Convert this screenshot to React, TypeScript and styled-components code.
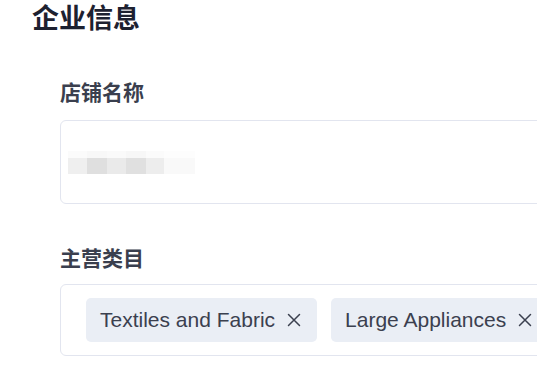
import { ReactElement } from "react";
import styled, { createGlobalStyle } from "styled-components";

const GlobalStyle = createGlobalStyle`
  html, body {
    margin: 0;
    padding: 0;
    background: #ffffff;
  }
  body {
    font-family: "Liberation Sans", "Noto Sans CJK SC", sans-serif;
  }
`;

const Page = styled.div`
  width: 537px;
  height: 379px;
  overflow: hidden;
  padding-left: 32px;
  box-sizing: border-box;
`;

const Title = styled.h2`
  margin: 0;
  font-family: "Noto Sans CJK SC", sans-serif;
  font-size: 27px;
  line-height: 34px;
  font-weight: 700;
  color: #1d2130;
`;

const Section = styled.div`
  padding-left: 28px;
  padding-top: 45px;
  display: flex;
  flex-direction: column;
`;

const Field = styled.div<{ $gap: number }>`
  display: flex;
  flex-direction: column;
  gap: ${(p) => p.$gap}px;
  & + & {
    margin-top: 41px;
  }
`;

const Label = styled.div`
  font-family: "Noto Sans CJK SC", sans-serif;
  font-size: 21px;
  line-height: 24px;
  font-weight: 700;
  color: #3a3f4e;
`;

const InputBox = styled.div`
  width: 600px;
  height: 84px;
  box-sizing: border-box;
  border: 1px solid #e2e5ef;
  border-radius: 6px;
  display: flex;
  align-items: center;
  padding-left: 7px;
`;

const Mosaic = styled.div`
  display: flex;
  flex-direction: column;
`;

const MosaicRow = styled.div`
  display: flex;
`;

const Cell = styled.span<{ $c: string; $w: number; $h: number }>`
  display: block;
  width: ${(p) => p.$w}px;
  height: ${(p) => p.$h}px;
  background: ${(p) => p.$c};
`;

const TagBox = styled.div`
  width: 700px;
  box-sizing: border-box;
  border: 1px solid #e2e5ef;
  border-radius: 6px;
  display: flex;
  gap: 14px;
  padding: 13px 25px;
`;

const Tag = styled.div`
  height: 44px;
  box-sizing: border-box;
  display: flex;
  align-items: center;
  gap: 12px;
  padding: 0 16px 0 14px;
  background: #eaeef5;
  border-radius: 5px;
  font-size: 21px;
  color: #3b404f;
  white-space: nowrap;
  flex-shrink: 0;
`;

const Close = styled.svg`
  width: 14px;
  height: 14px;
  flex-shrink: 0;
`;

const topRow = [
  { c: "#fbfbfb", w: 19 },
  { c: "#f8f8f8", w: 20 },
  { c: "#fafafa", w: 19 },
  { c: "#f7f7f7", w: 20 },
  { c: "#fbfbfb", w: 18 },
  { c: "#fdfdfd", w: 31 },
];

const mainRow = [
  { c: "#efefef", w: 19 },
  { c: "#dfdfdf", w: 20 },
  { c: "#eaeaea", w: 19 },
  { c: "#e0e0e0", w: 20 },
  { c: "#ededed", w: 18 },
  { c: "#f9f9f9", w: 31 },
];

const tags = ["Textiles and Fabric", "Large Appliances", "Home Decor"];

function CloseIcon(): ReactElement {
  return (
    <Close viewBox="0 0 14 14" fill="none">
      <path
        d="M1.5 1.5L12.5 12.5M12.5 1.5L1.5 12.5"
        stroke="#3b404f"
        strokeWidth="1.5"
        strokeLinecap="round"
      />
    </Close>
  );
}

export default function App(): ReactElement {
  return (
    <>
      <GlobalStyle />
      <Page>
        <Title>企业信息</Title>
        <Section>
          <Field $gap={17}>
            <Label>店铺名称</Label>
            <InputBox>
              <Mosaic>
                <MosaicRow>
                  {topRow.map((b, i) => (
                    <Cell key={i} $c={b.c} $w={b.w} $h={7} />
                  ))}
                </MosaicRow>
                <MosaicRow>
                  {mainRow.map((b, i) => (
                    <Cell key={i} $c={b.c} $w={b.w} $h={16} />
                  ))}
                </MosaicRow>
              </Mosaic>
            </InputBox>
          </Field>
          <Field $gap={15}>
            <Label>主营类目</Label>
            <TagBox>
              {tags.map((t) => (
                <Tag key={t}>
                  {t}
                  <CloseIcon />
                </Tag>
              ))}
            </TagBox>
          </Field>
        </Section>
      </Page>
    </>
  );
}
